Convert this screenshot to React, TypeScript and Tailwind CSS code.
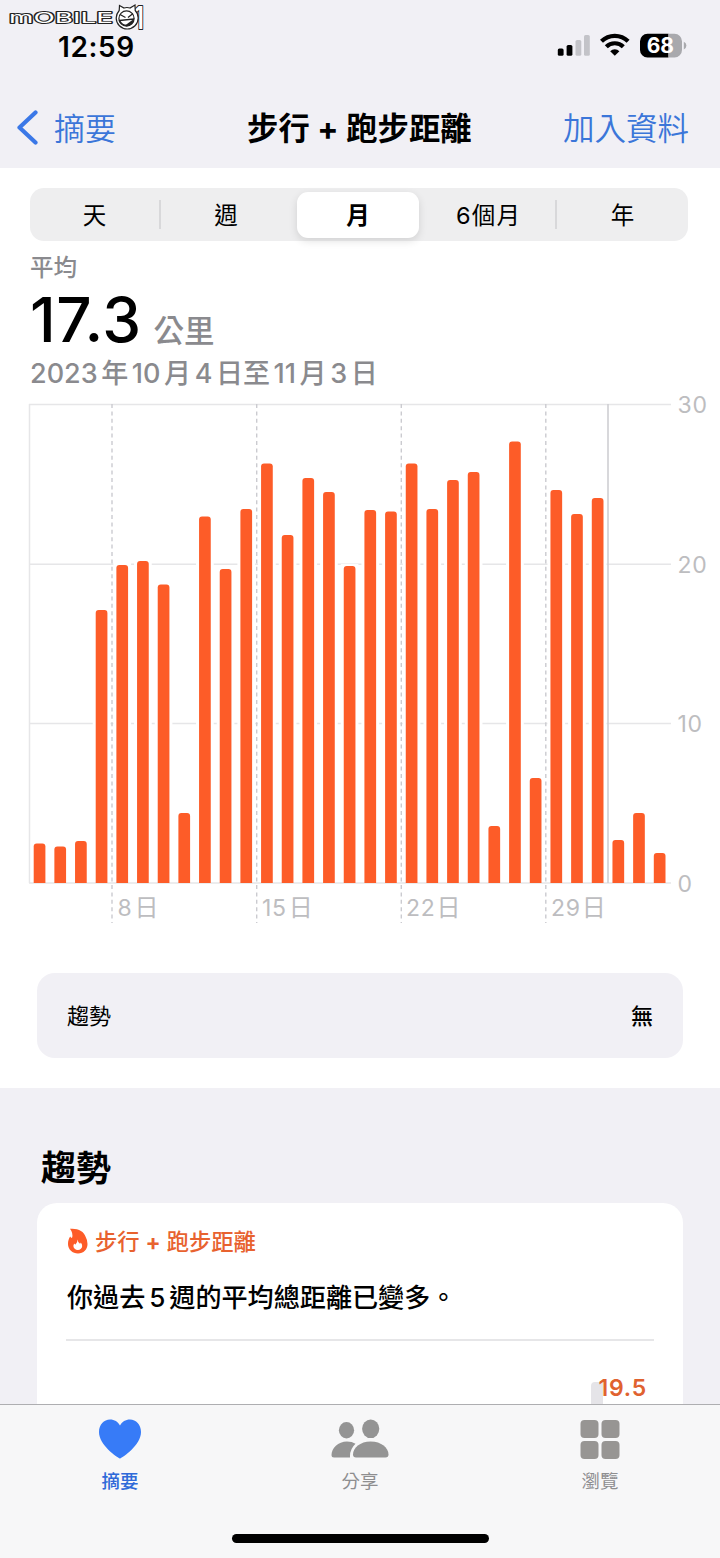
import React from "react";

const distances = [
  2.48, 2.29, 2.63, 17.12, 19.94, 20.19, 18.71, 4.39, 22.98, 19.69, 23.45, 26.3, 21.82, 25.39, 24.51, 19.87,
  23.39, 23.29, 26.3, 23.45, 25.27, 25.77, 3.57, 27.68, 6.58, 24.64, 23.13, 24.14, 2.7, 4.39, 1.88,
];

const BASE = 883;
const UNIT = 15.95;

function Watermark() {
  return (
    <svg className="absolute left-2 top-0.5 h-9 w-[144px] overflow-visible" viewBox="8 2 144 36">
      <g fontFamily="Inter, sans-serif" fill="#fff" stroke="#222" paintOrder="stroke" strokeLinejoin="round">
        <text x="9" y="23.300" fontSize="15" fontWeight="400" strokeWidth="1.800" textLength="104" lengthAdjust="spacingAndGlyphs">
          mOBILE
        </text>
        <text x="134" y="28.500" fontSize="31" fontWeight="600" strokeWidth="2.200" textLength="10" lengthAdjust="spacingAndGlyphs">
          1
        </text>
      </g>
      <path
        d="M119.500 5.500l4.500 2.500q3-1 6 0l5-3 .200 5.500q3 3 3 7.500a11 11 0 1 1-22 0q0-4 3-7.500z"
        fill="#fff"
        stroke="#222"
        strokeWidth="1.200"
      />
      <circle cx="126.500" cy="18.500" r="7.600" fill="#fff" stroke="#222" strokeWidth="1.200" />
      <path d="M120 14.500l5.500 3M133 13.500l-5 4M119.500 20.500l14-1.500q-1 6-6.500 6.500-5 0-7.500-5z" fill="none" stroke="#222" strokeWidth="1.300" />
      <path d="M125 25.500l8-6q0 5-5.500 6.500z" fill="#222" />
    </svg>
  );
}

function StatusIcons() {
  return (
    <svg className="mr-[33px] h-7 w-[130px]" viewBox="557 32 130 28">
      <rect x="557.800" y="48.500" width="5.800" height="7.300" rx="1.600" />
      <rect x="566.600" y="45" width="5.800" height="10.800" rx="1.600" />
      <rect x="575.500" y="40" width="5.800" height="15.800" rx="1.600" fill="#c3c3c8" />
      <rect x="584" y="35" width="5.800" height="20.800" rx="1.600" fill="#c3c3c8" />
      <g fill="none" stroke="#000" strokeWidth="4.200">
        <path d="M601.500 41.300a18.800 18.800 0 0 1 26.600 0" />
        <path d="M606.300 46.800a12 12 0 0 1 17 0" />
      </g>
      <path d="M614.800 55.700l-4.600-4.500a6.500 6.500 0 0 1 9.200 0z" />
      <path d="M647.500 33.700H668.500V57.500H647.500a7.500 7.500 0 0 1-7.500-7.500V41.200a7.500 7.500 0 0 1 7.500-7.500z" />
      <path d="M668.500 33.700h6a7.500 7.500 0 0 1 7.500 7.500V50a7.500 7.500 0 0 1-7.500 7.500h-6z" fill="#a9a9ad" />
      <path d="M683.800 41.800q2.600 1 2.600 3.800t-2.600 3.800z" fill="#a9a9ad" />
      <text x="660.300" y="53.200" fontSize="21" fontWeight="700" textAnchor="middle" fill="#fff" fontFamily="Inter, sans-serif">
        68
      </text>
    </svg>
  );
}

function Header() {
  return (
    <header className="relative h-[168px] shrink-0 bg-[#f1f0f5]">
      <Watermark />
      <div className="flex h-[92px] items-center justify-between pl-[58px]">
        <span className="pt-0.5 text-[28px] leading-none font-semibold tracking-[0.6px]">12:59</span>
        <StatusIcons />
      </div>
      <nav className="flex h-[72px] items-center justify-between pr-[31px] pl-4 text-[31px] leading-none">
        <div className="flex w-[231px] items-center gap-[15px] font-[350] text-[#3b76d9]">
          <svg className="h-9 w-[23px]" viewBox="0 0 23 36" fill="none" stroke="#3b78e7" strokeWidth="4.200" strokeLinecap="round" strokeLinejoin="round">
            <path d="M19.500 2.500L3.500 17.500l16 15" />
          </svg>
          <span>摘要</span>
        </div>
        <h1 className="flex-1 pt-1 text-[31.3px] font-bold tracking-[0.1px] whitespace-nowrap">步行 + 跑步距離</h1>
        <span className="pt-0.5 text-right text-[31.500px] font-[350] text-[#3b76d9]">加入資料</span>
      </nav>
    </header>
  );
}

function RangePicker() {
  return (
    <div className="mx-[30px] mt-5 grid h-[53px] w-[658px] grid-cols-[129px_136px_127px_133px_133px] items-center rounded-[14px] bg-[#eeeeef] text-center text-[23.5px] leading-none">
      <span className="pt-0.5">天</span>
      <span className="flex h-[29px] items-center justify-center border-l-2 border-[#d8d8da] pt-0.5 pr-1">週</span>
      <span className="ml-0.5 flex h-[46px] w-[122px] items-center justify-center rounded-[11px] bg-white pt-0.5 font-bold shadow-[0_3px_8px_rgba(0,0,0,0.12)]">
        月
      </span>
      <span className="pt-0.5 tracking-[1.2px]">6個月</span>
      <span className="flex h-[29px] items-center justify-center border-l-2 border-[#d8d8da] pt-0.5">年</span>
    </div>
  );
}

function Chart() {
  return (
    <svg className="block h-[535px] w-[720px] shrink-0 overflow-visible" viewBox="0 395 720 535">
      <g stroke="#e6e6e8" strokeWidth="1.500">
        <path d="M29 404.500H671M29 564.200H671M29 723.600H671M29 883H671M29.500 404V883" />
      </g>
      <path d="M608 404V883" stroke="#cfcfd2" strokeWidth="1.600" />
      <path
        d="M112 404V923M256.700 404V923M401.300 404V923M545.800 404V923"
        stroke="#cbcbd0"
        strokeWidth="1.400"
        strokeDasharray="4 3.400"
      />
      {distances.map((d, i) => {
        const x = 33.7 + i * 20.67;
        const y = BASE - d * UNIT;
        return (
          <g key={i}>
            <rect x={x - 3} y={y - 2} width="17.700" height={BASE - y + 1} fill="#fff" />
            <path d={`M${x} ${BASE}V${y + 3}q0-3 3-3h5.700q3 0 3 3V${BASE}z`} fill="#fd5c28" />
          </g>
        );
      })}
      <g fontFamily="Inter, 'Noto Sans CJK TC', sans-serif" fontSize="23" fill="#bdbdc0" letterSpacing="0.700">
        <text x="677.500" y="413">30</text>
        <text x="677.500" y="573">20</text>
        <text x="677.500" y="732">10</text>
        <text x="677.500" y="891.500">0</text>
        <text x="117.500" y="916">8<tspan dx="2" fontSize="24">日</tspan></text>
        <text x="262" y="916">15<tspan dx="2" fontSize="24">日</tspan></text>
        <text x="406" y="916">22<tspan dx="1" fontSize="24">日</tspan></text>
        <text x="551" y="916">29<tspan dx="1" fontSize="24">日</tspan></text>
      </g>
    </svg>
  );
}

function Summary() {
  return (
    <section className="h-[920px] shrink-0 overflow-hidden bg-white">
      <RangePicker />
      <div className="h-[154px] pt-[15px] pl-[30px] leading-none font-medium text-[#8a8a8e]">
        <div className="text-[23.5px] leading-6">平均</div>
        <div className="flex h-[69px] items-baseline gap-3 whitespace-nowrap">
          <span className="text-[62px] leading-[79px] font-[550] tracking-[0.5px] text-black">17.3</span>
          <span className="text-[30.5px] leading-none">公里</span>
        </div>
        <div className="flex h-12 items-center gap-[3.6px] text-[27px] whitespace-nowrap">
          <span>2023</span>
          <span>年</span>
          <span>10</span>
          <span>月</span>
          <span>4</span>
          <span>日至</span>
          <span>11</span>
          <span>月</span>
          <span>3</span>
          <span>日</span>
        </div>
      </div>
      <Chart />
      <div className="mx-[37px] mt-[43px] flex h-[85px] items-center justify-between rounded-[18px] bg-[#f1f0f5] px-[30px] pt-0.5 text-[22px]">
        <span>趨勢</span>
        <span className="font-medium">無</span>
      </div>
    </section>
  );
}

function Trends() {
  return (
    <section className="min-h-0 flex-1 overflow-hidden bg-[#f1f0f5] px-[37px] pt-[58px]">
      <h2 className="ml-1 h-[57px] text-[35px] leading-[44px] font-bold">趨勢</h2>
      <div className="h-[240px] rounded-t-[20px] bg-white px-[29px] pt-[25px]">
        <div className="flex h-7 items-center gap-[7px] text-[22.3px] leading-none font-medium text-[#e8622f]">
          <svg className="mb-0.5 h-[26px] w-[22px]" viewBox="0 0 22 26">
            <path
              d="M4 .800C12 0 18 3.500 19.500 8.500Q21.500 12 21.500 16C21.500 21.500 17.500 25.500 12 25.500S2 21.500 2 16C2 13 2.800 10.500 4.200 8.500q.5 1 1.800 1.500Q7.500 5.500 4 .800z"
              fill="#fd5c28"
            />
            <path d="M11.500 11.500q.200 2.500 2.500 4.200.6-.5.8-1.200 1.400 1.700 1.400 3.500a4.400 4 0 0 1-8.800 0q0-1.500.9-2.500.4.8 1.200 1 2.200-2 2-5z" fill="#fff" />
          </svg>
          <span className="whitespace-nowrap">
            步行 <span className="font-bold">+</span> 跑步距離
          </span>
        </div>
        <p className="mt-6 h-[61px] border-b-2 border-[#e6e6e8] pl-px text-[26.1px] leading-[35px] font-medium whitespace-nowrap [word-spacing:-3px]">
          你過去 5 週的平均總距離已變多。
        </p>
        <div className="flex justify-end pt-[41px] pr-[7px]">
          <span className="h-6 w-3 rounded-tl bg-[#e5e4e8]" />
          <span className="-mt-2 -ml-[5px] text-[23px] leading-7 font-semibold tracking-[0.8px] text-[#e0622f]">19.5</span>
        </div>
      </div>
    </section>
  );
}

function TabBar() {
  return (
    <footer className="h-[154px] shrink-0 border-t border-[#aeaeb1] bg-[#f7f7f8] text-[18.5px] leading-none">
      <div className="grid h-[129px] grid-cols-3 text-[#8e8e90]">
        <div className="flex flex-col items-center pt-3.5 font-medium text-[#2f6ad9]">
          <svg className="h-10 w-[42px]" viewBox="0 0 42 40">
            <path d="M21 39.500C18 38.500 0 26 0 13 0 5.500 5 .500 11 .500c4.500 0 8 2.300 10 6 2-3.700 5.500-6 10-6 6 0 11 5 11 12.500C42 26 24 38.500 21 39.500z" fill="#377bf7" />
          </svg>
          <span className="mt-[13px]">摘要</span>
        </div>
        <div className="flex flex-col items-center pt-3.5">
          <svg className="h-10 w-[58px]" viewBox="0 0 58 40" fill="#949494">
            <ellipse cx="15.500" cy="11.300" rx="7.600" ry="8.200" />
            <ellipse cx="39.700" cy="9.800" rx="8.600" ry="9.300" />
            <path d="M3 38.500Q.500 38.500.500 36C.500 29 7 22.500 16 22.500q5 0 8.500 2.300Q19 30 19 37v1.500z" />
            <path d="M25 38.500q-3 0-3-3C22 29 29 22.500 39.700 22.500S57.500 29 57.500 35.500q0 3-3 3z" />
          </svg>
          <span className="mt-[13px]">分享</span>
        </div>
        <div className="flex flex-col items-center pt-3.5">
          <svg className="h-10 w-10" viewBox="0 0 40 40" fill="#979593">
            <rect x=".500" y="1" width="18" height="18" rx="4" />
            <rect x="21.500" y="1" width="18" height="18" rx="4" />
            <rect x=".500" y="22" width="18" height="18" rx="4" />
            <rect x="21.500" y="22" width="18" height="18" rx="4" />
          </svg>
          <span className="mt-[13px]">瀏覽</span>
        </div>
      </div>
      <div className="mx-auto h-[9px] w-[257px] rounded-full bg-black" />
    </footer>
  );
}

export default function App() {
  return (
    <div className="flex h-[1558px] w-[720px] flex-col overflow-hidden bg-white font-['Inter','Noto_Sans_CJK_TC',sans-serif] text-black">
      <Header />
      <Summary />
      <Trends />
      <TabBar />
    </div>
  );
}
